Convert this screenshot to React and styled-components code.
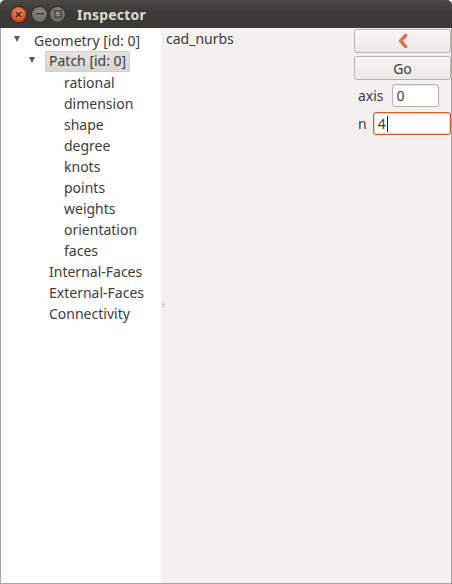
import React from "react"
import styled, { createGlobalStyle } from "styled-components"

const GlobalStyle = createGlobalStyle`
  html, body {
    margin: 0;
    padding: 0;
    background: #ffffff;
  }
  body {
    font-family: "Noto Sans", "DejaVu Sans", sans-serif;
  }
`

const Window = styled.div`
  width: 452px;
  height: 584px;
  display: flex;
  flex-direction: column;
  overflow: hidden;
`

const TitleBar = styled.div`
  height: 28px;
  flex: none;
  display: flex;
  align-items: center;
  padding-left: 11px;
  gap: 3px;
  background: linear-gradient(#4a4945, #3c3b37 40%, #3a3935);
  border-radius: 5px 5px 0 0;
`

const WinButton = styled.div`
  width: 15px;
  height: 15px;
  border-radius: 50%;
  display: flex;
  align-items: center;
  justify-content: center;
  background: ${({ close }) =>
    close
      ? "radial-gradient(circle at 50% 35%, #f58a5e, #e4521f 60%, #c8431a)"
      : "radial-gradient(circle at 50% 35%, #8f8c86, #75726c 60%, #5f5c57)"};
  box-shadow: 0 0 0 1px #2c2b28;
  margin-right: ${({ close }) => (close ? "3px" : "0")};
`

const Title = styled.div`
  margin-left: 9px;
  color: #dfdbd2;
  font-weight: bold;
  font-size: 14px;
  letter-spacing: 0.2px;
`

const Body = styled.div`
  flex: 1;
  display: flex;
  border: 1px solid #a8a6a0;
  border-top: none;
`

const TreePanel = styled.div`
  width: 160px;
  flex: none;
  background: #ffffff;
  padding-top: 2px;
  display: flex;
  flex-direction: column;
`

const Row = styled.div`
  height: 21px;
  display: flex;
  align-items: center;
  padding-left: ${({ level }) => 13 + level * 15}px;
  font-size: 14px;
  color: #3c3c3c;
  white-space: nowrap;
`

const Arrow = styled.span`
  width: 0;
  height: 0;
  border-left: 3.5px solid transparent;
  border-right: 3.5px solid transparent;
  border-top: 6px solid #5a5a5a;
  margin-right: 14px;
  margin-top: -4px;
  flex: none;
`

const Spacer = styled.span`
  width: ${({ w }) => w}px;
  flex: none;
`

const Label = styled.span`
  padding: 0 4px 2px;
  margin-left: -4px;
  border-radius: 2px;
  background: ${({ selected }) => (selected ? "linear-gradient(#e4e3e1, #d6d5d2)" : "transparent")};
  box-shadow: ${({ selected }) => (selected ? "inset 0 0 0 1px #d0cfcb" : "none")};
`

const RightPanel = styled.div`
  flex: 1;
  position: relative;
  background: #f2f1f0;
  display: flex;
  justify-content: space-between;
  padding: 1px 0 0 5px;
`

const Grip = styled.div`
  position: absolute;
  left: 1px;
  top: 274px;
  width: 3px;
  height: 6px;
  background: repeating-linear-gradient(#c9c7c2 0 1px, transparent 1px 2px);
`

const Name = styled.div`
  font-size: 14px;
  color: #3c3c3c;
`

const Controls = styled.div`
  width: 97px;
  display: flex;
  flex-direction: column;
  gap: 3px;
`

const Button = styled.button`
  height: 24px;
  width: 97px;
  border: 1px solid #b5b2ac;
  border-radius: 3px;
  background: linear-gradient(#f8f7f6, #ebe9e6);
  box-shadow: inset 0 1px 0 #ffffff;
  font-family: "Noto Sans", sans-serif;
  font-size: 14px;
  color: #3c3c3c;
  display: flex;
  align-items: center;
  justify-content: center;
  padding: 0;
`

const Field = styled.div`
  display: flex;
  align-items: center;
  gap: ${({ gap }) => gap}px;
  padding-left: 4px;
  font-size: 14px;
  color: #3c3c3c;
  margin-top: ${({ top }) => top}px;
`

const Input = styled.div`
  width: ${({ w }) => w}px;
  height: 23px;
  box-sizing: border-box;
  border: 1px solid ${({ focus }) => (focus ? "#e0572c" : "#b5b2ac")};
  border-radius: 3px;
  background: #ffffff;
  box-shadow: ${({ focus }) => (focus ? "inset 0 0 0 1px rgba(240,120,80,0.35)" : "inset 0 1px 1px rgba(0,0,0,0.08)")};
  display: flex;
  align-items: center;
  padding-left: 4px;
  font-size: 14px;
  color: #3c3c3c;
`

const Caret = styled.span`
  width: 1px;
  height: 16px;
  background: #202020;
  margin-left: 1px;
`

const leaves = ["rational", "dimension", "shape", "degree", "knots", "points", "weights", "orientation", "faces"]
const bottom = ["Internal-Faces", "External-Faces", "Connectivity"]

const BackIcon = () => (
  <svg width="10" height="14" viewBox="0 0 10 14">
    <path d="M7.5 1.5 L2.5 7 L7.5 12.5" fill="none" stroke="#e0572c" strokeWidth="3.2" strokeLinecap="round" strokeLinejoin="round" />
    <path d="M7.5 1.5 L2.5 7 L7.5 12.5" fill="none" stroke="#f29266" strokeWidth="1" strokeLinecap="round" strokeLinejoin="round" />
  </svg>
)

const App = () => (
  <>
    <GlobalStyle />
    <Window>
      <TitleBar>
        <WinButton close>
          <svg width="7" height="7" viewBox="0 0 7 7">
            <path d="M1 1 L6 6 M6 1 L1 6" stroke="#3a2016" strokeWidth="1.4" />
          </svg>
        </WinButton>
        <WinButton>
          <svg width="8" height="2" viewBox="0 0 8 2">
            <rect width="8" height="1.5" fill="#3c3b37" />
          </svg>
        </WinButton>
        <WinButton>
          <svg width="8" height="8" viewBox="0 0 8 8">
            <rect x="0.75" y="0.75" width="6.5" height="6.5" fill="none" stroke="#3c3b37" strokeWidth="1.3" />
          </svg>
        </WinButton>
        <Title>Inspector</Title>
      </TitleBar>
      <Body>
        <TreePanel>
          <Row level={0}>
            <Arrow />
            Geometry [id: 0]
          </Row>
          <Row level={1}>
            <Arrow />
            <Label selected>Patch [id: 0]</Label>
          </Row>
          {leaves.map((l) => (
            <Row key={l} level={2}>
              <Spacer w={20} />
              {l}
            </Row>
          ))}
          {bottom.map((l) => (
            <Row key={l} level={1}>
              <Spacer w={20} />
              {l}
            </Row>
          ))}
        </TreePanel>
        <RightPanel>
          <Grip />
          <Name>cad_nurbs</Name>
          <Controls>
            <Button>
              <BackIcon />
            </Button>
            <Button>Go</Button>
            <Field gap={8} top={1}>
              axis
              <Input w={47}>0</Input>
            </Field>
            <Field gap={6} top={2}>
              n
              <Input w={78} focus>
                4<Caret />
              </Input>
            </Field>
          </Controls>
        </RightPanel>
      </Body>
    </Window>
  </>
)

export default App
